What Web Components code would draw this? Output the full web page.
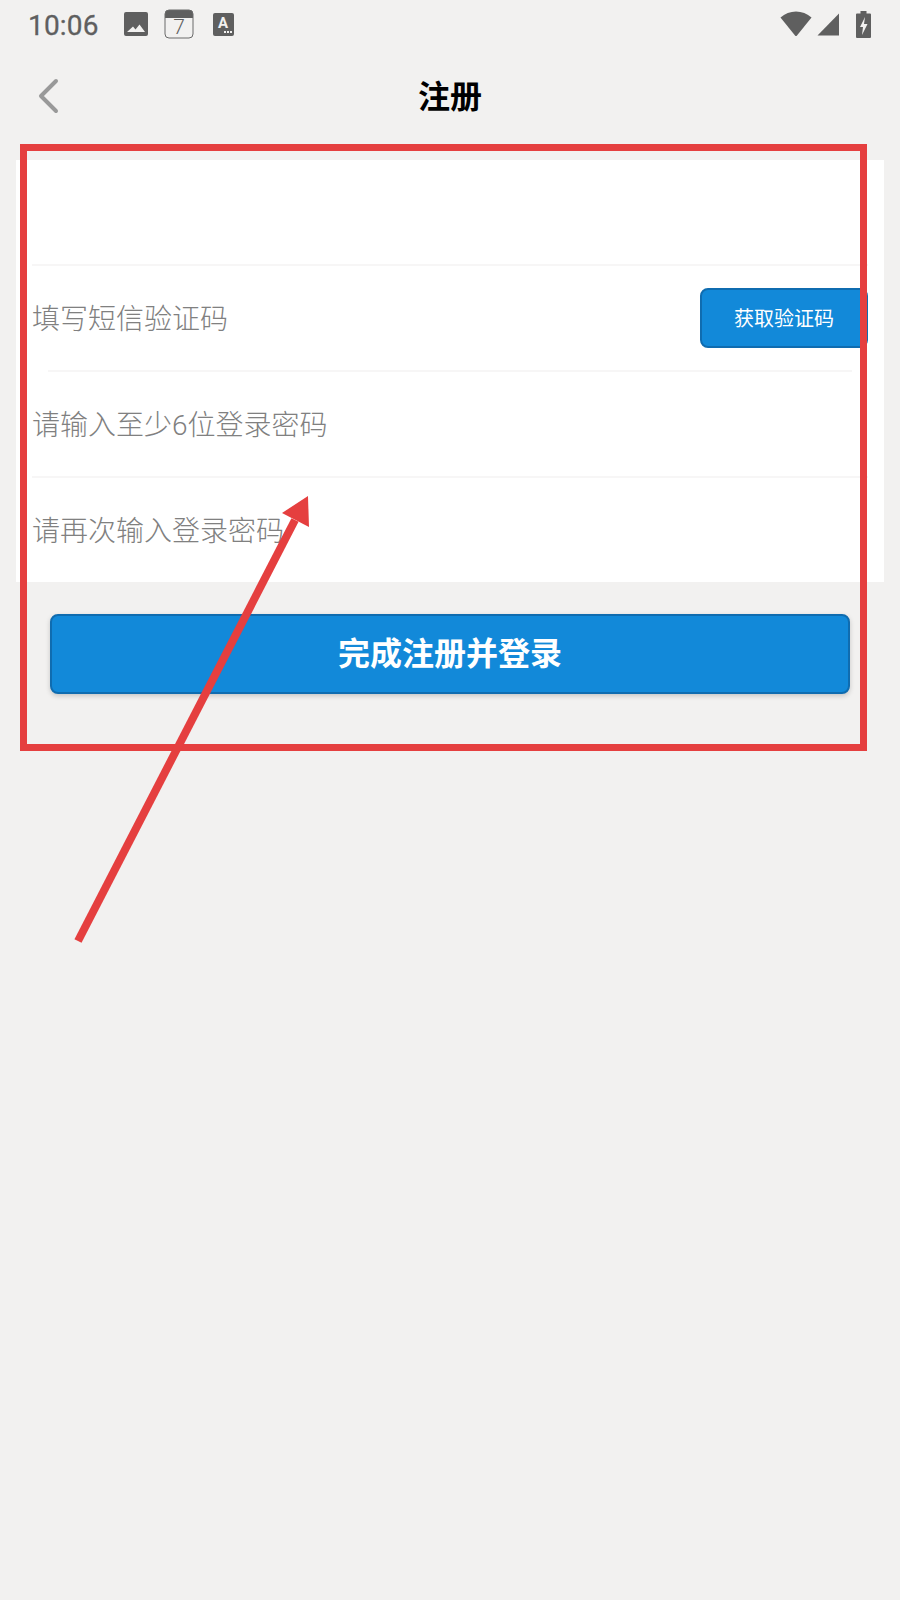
<!DOCTYPE html>
<html lang="zh">
<head>
<meta charset="utf-8">
<title>注册</title>
<style>
    html, body {
        margin: 0;
        padding: 0;
        background: #f2f1f0;
    }
    body {
        width: 900px;
        height: 1600px;
        font-family: Roboto, "Noto Sans CJK SC", sans-serif;
        position: relative;
        overflow: hidden;
    }
</style>
</head>
<body>
<status-bar time="10:06"></status-bar>
<nav-bar title="注册"></nav-bar>
<form-card>
    <form-row inset-left="16" inset-right="16"></form-row>
    <form-row inset-left="32" inset-right="32">
        填写短信验证码
        <code-button slot="action">获取验证码</code-button>
    </form-row>
    <form-row inset-left="16" inset-right="16">请输入至少6位登录密码</form-row>
    <form-row last>请再次输入登录密码</form-row>
</form-card>
<submit-button>完成注册并登录</submit-button>
<mark-up></mark-up>

<script>
class StatusBar extends HTMLElement {
    constructor() {
        super();
        this.attachShadow({ mode: 'open' });
    }

    connectedCallback() {
        const time = this.getAttribute('time') || '';
        this.shadowRoot.innerHTML = `
            <style>
                :host {
                    display: flex;
                    align-items: center;
                    height: 48px;
                    padding: 0 29px 0 28px;
                    color: #5f5f5f;
                    font-family: Roboto, sans-serif;
                }
                .time {
                    font-size: 28px;
                    line-height: 48px;
                    width: 96px;
                    padding-top: 3px;
                    letter-spacing: 0.2px;
                    -webkit-text-stroke: 0.3px #5f5f5f;
                }
                .left, .right {
                    display: flex;
                    align-items: center;
                }
                .right {
                    margin-left: auto;
                }
                svg {
                    display: block;
                    fill: #5f5f5f;
                }
            </style>
            <div class="left">
                <span class="time">${time}</span>
                <svg width="24" height="24" viewBox="0 0 24 24">
                    <path fill-rule="evenodd" d="M2 0h20a2 2 0 0 1 2 2v20a2 2 0 0 1-2 2H2a2 2 0 0 1-2-2V2a2 2 0 0 1 2-2zM3 20h18l-5.500-7.500-4 5-2.500-3z"/>
                </svg>
                <svg style="margin:6px 0 0 16px" width="30" height="36" viewBox="0 0 30 36">
                    <path d="M5 1h20a4 4 0 0 1 4 4v4H1V5a4 4 0 0 1 4-4z"/>
                    <rect x="1" y="1" width="28" height="28" rx="4" fill="none" stroke="#6a6a6a" stroke-width="1"/>
                    <text x="15" y="25" text-anchor="middle" font-family="Roboto, sans-serif" font-weight="300" font-size="21" fill="#5f5f5f">7</text>
                </svg>
                <svg style="margin-left:19px" width="21" height="23" viewBox="0 0 21 23">
                    <rect width="21" height="23" rx="2"/>
                    <text x="10" y="15" text-anchor="middle" font-family="Roboto, sans-serif" font-weight="700" font-size="15" fill="#f2f1f0">A</text>
                    <rect x="11" y="18" width="2" height="2" fill="#f2f1f0"/>
                    <rect x="14" y="18" width="2" height="2" fill="#f2f1f0"/>
                    <rect x="17" y="18" width="2" height="2" fill="#f2f1f0"/>
                </svg>
            </div>
            <div class="right">
                <svg width="32" height="26" viewBox="0 0 32 26">
                    <path d="M0.500 6.500C9 -1.500 23 -1.500 31.500 6.500L17 24.500a1.400 1.400 0 0 1-2 0z"/>
                </svg>
                <svg style="margin-left:5px" width="23" height="23" viewBox="0 0 23 23">
                    <path d="M22 0.500V22.500H0.500z"/>
                </svg>
                <svg style="margin-left:16px" width="15" height="27" viewBox="0 0 15 27">
                    <path fill-rule="evenodd" d="M4.500 0h6v2.500H14a1 1 0 0 1 1 1V26a1 1 0 0 1-1 1H1a1 1 0 0 1-1-1V3.500a1 1 0 0 1 1-1h3.500zM9 6L4 16h3l-1 8 5.500-11H8z"/>
                </svg>
            </div>
        `;
    }
}

class NavBar extends HTMLElement {
    constructor() {
        super();
        this.attachShadow({ mode: 'open' });
    }

    connectedCallback() {
        const title = this.getAttribute('title') || '';
        this.shadowRoot.innerHTML = `
            <style>
                :host {
                    display: grid;
                    grid-template-columns: 100px 1fr 100px;
                    align-items: center;
                    height: 96px;
                    margin-bottom: 16px;
                    box-sizing: border-box;
                }
                .back {
                    display: block;
                    margin-left: 36px;
                }
                h1 {
                    margin: 0;
                    padding-bottom: 4px;
                    font-size: 32px;
                    font-weight: 700;
                    line-height: 92px;
                    text-align: center;
                    color: #000;
                    font-family: "Noto Sans CJK SC", sans-serif;
                }
            </style>
            <svg class="back" width="26" height="40" viewBox="0 0 26 40">
                <path d="M20 5L5 20l15 15" fill="none" stroke="#999" stroke-width="4" stroke-linecap="round" stroke-linejoin="round"/>
            </svg>
            <h1>${title}</h1>
            <span></span>
        `;
    }
}

class FormCard extends HTMLElement {
    constructor() {
        super();
        this.attachShadow({ mode: 'open' });
        this.shadowRoot.innerHTML = `
            <style>
                :host {
                    display: flex;
                    flex-direction: column;
                    margin: 0 16px;
                    background: #fff;
                }
            </style>
            <slot></slot>
        `;
    }
}

class FormRow extends HTMLElement {
    constructor() {
        super();
        this.attachShadow({ mode: 'open' });
    }

    connectedCallback() {
        const left = this.getAttribute('inset-left') || '0';
        const right = this.getAttribute('inset-right') || '0';
        const last = this.hasAttribute('last');
        this.shadowRoot.innerHTML = `
            <style>
                :host {
                    display: flex;
                    flex-direction: column;
                    height: ${last ? 104 : 106}px;
                    font-family: Roboto, "Noto Sans CJK SC", sans-serif;
                    font-size: 28px;
                    font-weight: 300;
                    color: #808080;
                }
                .body {
                    flex: 1;
                    display: flex;
                    align-items: center;
                    justify-content: space-between;
                    padding: 0 16px;
                    min-height: 0;
                }
                .label {
                    position: relative;
                    top: -1px;
                }
                .line {
                    height: 2px;
                    margin: 0 ${right}px 0 ${left}px;
                    background: #f7f6f6;
                }
            </style>
            <div class="body">
                <span class="label"><slot></slot></span>
                <slot name="action"></slot>
            </div>
            ${last ? '' : '<div class="line"></div>'}
        `;
    }
}

class CodeButton extends HTMLElement {
    constructor() {
        super();
        this.attachShadow({ mode: 'open' });
        this.shadowRoot.innerHTML = `
            <style>
                :host {
                    display: flex;
                    align-items: center;
                    justify-content: center;
                    box-sizing: border-box;
                    width: 168px;
                    height: 60px;
                    padding-bottom: 2px;
                    background: #1289d9;
                    border: 2px solid #0f6cb0;
                    border-radius: 8px;
                    color: #fff;
                    font-size: 20px;
                    font-weight: 400;
                    font-family: "Noto Sans CJK SC", sans-serif;
                }
            </style>
            <slot></slot>
        `;
    }
}

class SubmitButton extends HTMLElement {
    constructor() {
        super();
        this.attachShadow({ mode: 'open' });
        this.shadowRoot.innerHTML = `
            <style>
                :host {
                    display: flex;
                    align-items: center;
                    justify-content: center;
                    box-sizing: border-box;
                    height: 80px;
                    margin: 32px 50px 0;
                    padding-bottom: 6px;
                    background: #1289d9;
                    border: 2px solid #0f6cb0;
                    border-radius: 8px;
                    box-shadow: 0 2px 5px rgba(0,0,0,0.18);
                    color: #fff;
                    font-size: 32px;
                    font-weight: 700;
                    font-family: "Noto Sans CJK SC", sans-serif;
                }
            </style>
            <slot></slot>
        `;
    }
}

// red annotation drawn over the screenshot
class MarkUp extends HTMLElement {
    constructor() {
        super();
        this.attachShadow({ mode: 'open' });
        this.shadowRoot.innerHTML = `
            <style>
                :host {
                    display: block;
                    position: absolute;
                    left: 0;
                    top: 0;
                    width: 900px;
                    height: 1600px;
                    pointer-events: none;
                }
                svg {
                    display: block;
                }
            </style>
            <svg width="900" height="1600" viewBox="0 0 900 1600">
                <rect x="23.500" y="147.500" width="840" height="600" fill="none" stroke="#e53f3f" stroke-width="7"/>
                <path d="M78 941L295 520" fill="none" stroke="#e53f3f" stroke-width="8"/>
                <path d="M308 496L309 527L282 513z" fill="#e53f3f"/>
            </svg>
        `;
    }
}

customElements.define('status-bar', StatusBar);
customElements.define('nav-bar', NavBar);
customElements.define('form-card', FormCard);
customElements.define('form-row', FormRow);
customElements.define('code-button', CodeButton);
customElements.define('submit-button', SubmitButton);
customElements.define('mark-up', MarkUp);
</script>
</body>
</html>
